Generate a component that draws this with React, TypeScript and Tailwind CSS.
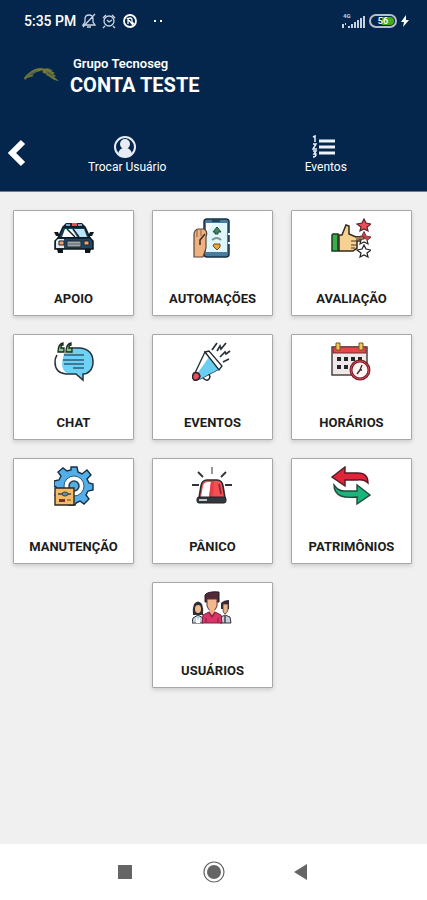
import type { ReactNode } from 'react'

function CarIcon() {
  return (
    <>
      <path d="M9 8 12 5h16l3 3v2H9z" fill="#20242e" />
      <path d="M12 6h4v2h-4zM24 6h4v2h-4z" fill="#7fa5c4" />
      <path d="M18 5h5v3h-5z" fill="#f04b50" />
      <path d="M9 9h22l5 11H4z" fill="#173e5c" stroke="#111820" strokeWidth="1.5" />
      <path d="M11 11h7l5 8H8z" fill="#fff" />
      <path d="M17 11h13l3 8h-9z" fill="#b8e7f7" />
      <path d="m13 11 8 8M19 11l6 8" stroke="#17212b" strokeWidth="1.5" />
      <path d="M0 14h4l2 4H2zM40 14h-4l-2 4h4z" fill="#111820" />
      <path d="M4 20h32l3 3v8H1v-8z" fill="#19486a" stroke="#111820" strokeWidth="1.5" />
      <path d="M4 21h6v9H2v-7z" fill="#e4eaee" />
      <path d="M5 23h5v4H5zM30 23h5v4h-5z" fill="#f7a36e" stroke="#222" strokeWidth="1" />
      <path d="M13 23h14v6H13z" fill="#a0a6a8" stroke="#222" strokeWidth="1" />
      <path d="M13 26h14" stroke="#59636a" />
      <path d="M3 31h6v4H4zM31 31h6l-1 4h-5z" fill="#10151a" />
    </>
  )
}

function PhoneIcon() {
  return (
    <>
      <rect x="12" y="1" width="25" height="38" rx="3" fill="#477c9e" stroke="#173144" strokeWidth="1.5" />
      <path d="M14 5h21v29H14z" fill="#dff6fc" />
      <path d="M14 5h7l-7 10z" fill="#fff" />
      <path d="M20 3h8" stroke="#183246" strokeWidth="1.5" />
      <path d="M37 15v2M37 24v2" stroke="#eef9ff" strokeWidth="2" />
      <path d="m25 9 4 5h-3v2h-3v-2h-2z" fill="#3e8c58" stroke="#214937" strokeWidth="1" />
      <path d="M20 22q5-4 9 0" fill="none" stroke="#7b9693" strokeWidth="2" />
      <path d="M22 26h6v3l-3 3-4-4z" fill="#f4a32f" stroke="#624d2d" strokeWidth="1" />
      <path d="M2 39V17q0-5 4-6h6q4 2 2 8v11l-3 9z" fill="#efb17f" stroke="#5c4638" strokeWidth="1.2" />
      <path d="M5 12v7M9 12v6" fill="none" stroke="#8b6248" strokeWidth="1" />
      <path d="m13 16-5 6v5" fill="none" stroke="#352e2a" strokeWidth="1.5" />
    </>
  )
}

function RatingIcon() {
  return (
    <>
      <path d="M2 16h5v17H1V17z" fill="#3bae47" stroke="#153d24" strokeWidth="1.5" />
      <path d="M8 17h3l4-10 3 1v8l7 3h8v4h-7v7l-4 3H8z" fill="#f7d191" stroke="#34291c" strokeWidth="1.5" />
      <path d="M20 23h6M20 27h6M20 30h4" stroke="#493727" strokeWidth="1.2" />
      <path d="m33 1 2 4 5 1-4 3 1 4-4-2-4 2 1-4-4-3 5-1z" fill="#ef4d57" stroke="#52272d" strokeWidth="1.2" />
      <path d="m33 14 2 4 5 1-4 3 1 4-4-2-4 2 1-4-4-3 5-1z" fill="#fff" stroke="#34272a" strokeWidth="1.2" />
      <path d="m33 14 2 4 5 1-4 3-3-1-3 1-4-3 5-1z" fill="#ca464e" />
      <path d="M25 19h8v2h-8" fill="#f5c58a" stroke="#302822" />
      <path d="m33 27 2 4 5 1-4 3 1 4-4-2-4 2 1-4-4-3 5-1z" fill="#fff" stroke="#222" strokeWidth="1.2" />
    </>
  )
}

function ChatIcon() {
  return (
    <>
      <path d="M10 11h6q1-5 8-5c10 0 15 5 15 14 0 8-5 12-10 13v5l-7-6H14q-6-3-6-11z" fill="#6ed2f6" />
      <path d="M18 6h8c9 1 13 6 13 14 0 8-5 12-10 12v6l-7-6H12Q1 31 1 20q0-4 2-7" fill="none" stroke="#27323a" strokeWidth="1.5" />
      <path d="M10 13h20M9 18h21M10 22h20M19 26h11" stroke="#315e76" strokeWidth="1.5" />
      <path d="M9 1C5 2 4 5 4 10h6V6H7q0-3 2-3zM17 1c-4 1-5 4-5 9h6V6h-3q0-3 2-3z" fill="#8bc58a" stroke="#15291b" strokeWidth="1.3" />
    </>
  )
}

function MegaphoneIcon() {
  return (
    <>
      <path d="M13 10 27 27 8 37l-5-6z" fill="#fff" stroke="#243039" strokeWidth="1.3" />
      <path d="m17 15 10 12L8 37l-3-5z" fill="#69cef2" />
      <path d="m13 10 4-1 13 15-3 4z" fill="#fff" stroke="#202930" strokeWidth="1.3" />
      <path d="M2 31q4-2 6 3-1 5-6 4-3-3 0-7z" fill="#eb4d5d" stroke="#29232a" strokeWidth="1.5" />
      <path d="M11 36q5 5 7-1l-1-3" fill="none" stroke="#222b31" strokeWidth="1.5" />
      <path d="m20 8 5-7M25 9l3-5 1 3 5-6M28 15l5-5 1 2 4-3M31 20l6-3" fill="none" stroke="#283137" strokeWidth="1.7" />
    </>
  )
}

function CalendarIcon() {
  return (
    <>
      <path d="M1 5h35v28H1z" fill="#f0e8e8" stroke="#4b4245" strokeWidth="1.5" />
      <path d="M2 5h33v6H2z" fill="#e84449" stroke="#702e34" strokeWidth="1" />
      <path d="M5 1h4v7H5zM28 1h4v7h-4z" fill="#f4c84e" stroke="#70572c" strokeWidth="1" />
      <path d="M6 15h4v4H6zM13 15h4v4h-4zM20 15h4v4h-4zM27 15h4v4h-4zM6 23h4v4H6zM13 23h4v4h-4z" fill="#20282b" />
      <circle cx="29" cy="28" r="9" fill="#fff5f3" stroke="#7e1c2a" strokeWidth="3" />
      <circle cx="29" cy="28" r="9" fill="none" stroke="#d04c54" strokeWidth="1" />
      <path d="m31 23-2 5h2m-2 0-3 4" fill="none" stroke="#303137" strokeWidth="1.4" />
    </>
  )
}

function GearIcon() {
  return (
    <>
      <path d="M17 1h6l1 5 4 2 5-4 4 5-4 4 2 4 4 1v6l-5 1-2 4 3 4-5 5-4-3-4 2-1 2h-6l-2-5-5-2-4 2-3-5 3-4-2-4-2-1v-5l5-1 2-4-3-4 5-4 4 3 4-1z" fill="#54aeea" stroke="#152f41" strokeWidth="1.4" />
      <circle cx="20" cy="20" r="10" fill="#fff" stroke="#315a76" strokeWidth="1" />
      <circle cx="20" cy="20" r="5" fill="#52aee8" stroke="#243b4d" strokeWidth="1.5" />
      <path d="M1 22h19v17H1z" fill="#f2bd65" stroke="#30281e" strokeWidth="1.4" />
      <path d="M4 28h13" stroke="#384349" strokeWidth="1.5" />
      <ellipse cx="11" cy="28" rx="3" ry="2" fill="#6894a0" stroke="#384349" />
      <path d="M5 33h6v3H5z" fill="#7c3029" />
      <path d="M13 34h4" stroke="#a5653e" strokeWidth="1.5" />
    </>
  )
}

function SirenIcon() {
  return (
    <>
      <path d="m7 32 2-12q1-6 6-6h10q5 0 6 6l2 12z" fill="#f45053" stroke="#272c32" strokeWidth="1.6" />
      <path d="m9 31 2-11q1-4 5-4h3l-2 15z" fill="#fff" />
      <path d="m19 15-2 16h4l1-16z" fill="#df414a" />
      <path d="M27 18l2 10" stroke="#8b2b36" strokeWidth="1.8" />
      <rect x="5" y="31" width="29" height="6" rx="2" fill="#333840" stroke="#202327" />
      <path d="M7 33h8v2H7z" fill="#c7c8c9" />
      <path d="M20 1v7" stroke="#8a8d92" strokeWidth="1.8" />
      <path d="m6 6 5 5M34 6l-5 5M0 19h7M33 19h7" stroke="#30343b" strokeWidth="1.8" />
    </>
  )
}

function ArrowsIcon() {
  return (
    <>
      <path d="M1 11 14 1v6h13q10 0 10 10-4-4-11-3H14v6z" fill="#df2638" stroke="#4d1e25" strokeWidth="1.4" />
      <path d="M39 29 26 19v6H13q-6 0-10-6 0 8 7 11 5 2 16 1v7z" fill="#1cb47b" stroke="#214a3d" strokeWidth="1.4" />
    </>
  )
}

function PeopleIcon() {
  return (
    <>
      <path d="M1 25q-1-6 1-11 4-5 8 0 2 5 1 11z" fill="#302e35" />
      <ellipse cx="6" cy="19" rx="3" ry="4" fill="#f2b991" />
      <path d="m0 33 1-5 5-3 5 3v5z" fill="#c3d0e0" stroke="#34333d" />
      <path d="m4 27 2 3 2-3v6H4z" fill="#fff" />
      <path d="M29 19v-6q3-3 8-3v9z" fill="#332c30" />
      <path d="M31 14h5v6q-1 3-3 4-2-1-2-4z" fill="#eab188" stroke="#4a3833" strokeWidth="0.8" />
      <path d="m28 33 1-6 4-2 5 2 1 6z" fill="#c7cdd8" stroke="#34333d" />
      <path d="M33 26v7" stroke="#39454e" strokeWidth="1.5" />
      <path d="M13 12V5q3-4 14-3v10z" fill="#52293a" stroke="#241f24" />
      <path d="M15 9h10v7q-1 4-5 6-4-2-5-6z" fill="#f3b890" stroke="#5b3930" />
      <path d="M17 20h6v5h-6z" fill="#eaaa85" />
      <path d="m10 33 1-8 6-3 3 4 3-4 6 3 1 8z" fill="#dc3468" stroke="#68273c" strokeWidth="1" />
      <path d="m17 23 3 4 3-4M14 28v5M26 28v5" fill="none" stroke="#942443" strokeWidth="1.2" />
    </>
  )
}

const items: { label: string; icon: ReactNode }[] = [
  { label: 'APOIO', icon: <CarIcon /> },
  { label: 'AUTOMAÇÕES', icon: <PhoneIcon /> },
  { label: 'AVALIAÇÃO', icon: <RatingIcon /> },
  { label: 'CHAT', icon: <ChatIcon /> },
  { label: 'EVENTOS', icon: <MegaphoneIcon /> },
  { label: 'HORÁRIOS', icon: <CalendarIcon /> },
  { label: 'MANUTENÇÃO', icon: <GearIcon /> },
  { label: 'PÂNICO', icon: <SirenIcon /> },
  { label: 'PATRIMÔNIOS', icon: <ArrowsIcon /> },
  { label: 'USUÁRIOS', icon: <PeopleIcon /> },
]

function StatusBar() {
  return (
    <div className="flex h-[42px] items-center pl-6 pr-[18px]">
      <span className="text-[14px] font-medium">5:35 PM</span>
      <svg className="ml-1.5 h-4 w-[58px]" viewBox="0 0 58 16" fill="none" stroke="#cbd5e4" strokeWidth="1.3">
        <path d="M1 12h12l-2-3V6q0-4-4-4T3 6v3zM5 14h4M1 14 13 1" />
        <circle cx="27" cy="8" r="5" />
        <path d="m21 5 3-3m6 0 3 3m-8 2 2 2 3-2M23 13l-2 2m10-2 2 2" />
        <circle cx="48" cy="8" r="6" stroke="#fff" strokeWidth="1.8" />
        <path d="M46 11V7q0-2 2-2t2 2v2l2 2M45 5l6 7" stroke="#fff" />
      </svg>
      <svg className="ml-3 h-1 w-3" viewBox="0 0 12 4" fill="#fff">
        <path d="M2 1h2v2H2zM8 1h2v2H8z" />
      </svg>
      <div className="ml-auto flex items-center gap-1">
        <svg className="h-4 w-6" viewBox="0 0 24 16" fill="#c8d2df">
          <text x="2" y="5" fontSize="6" fontWeight="700">4G</text>
          <path d="M1 11h2v4H1zM4 10h1v2H4zM7 13h2v2H7zM10 11h2v4h-2zM13 9h2v6h-2zM16 7h2v8h-2zM19 5h2v10h-2zM22 3h2v12h-2z" />
        </svg>
        <svg className="h-[14px] w-7" viewBox="0 0 28 14">
          <rect x="1" y="1" width="26" height="12" rx="6" fill="#06254c" stroke="#b4bfca" strokeWidth="2" />
          <path d="M13 3h8q4 0 4 4t-4 4h-8z" fill="#43ac16" />
          <text x="14" y="10" textAnchor="middle" fontSize="9" fontWeight="600" fill="#fff">56</text>
        </svg>
        <svg className="h-3 w-2" viewBox="0 0 8 12" fill="#fff"><path d="M5 0 0 7h3l-1 5 6-7H5z" /></svg>
      </div>
    </div>
  )
}

export default function App() {
  return (
    <div className="flex min-h-screen flex-col bg-[#f0f0f0] font-['Roboto','Liberation_Sans',sans-serif]">
      <header className="border-b border-[#777985] bg-[#05264c] text-white">
        <StatusBar />
        <div className="flex h-[72px] items-start pl-6 pt-[13px]">
          <svg className="mt-3 h-[14px] w-9 shrink-0" viewBox="0 0 36 14" fill="#76783a">
            <path d="M0 11q3-4 6-6 5-4 11-4l4 1-5 2q-5 1-8 4l2 1-4 1-3 1-2 2z" />
            <path d="m18 2 8-1-2 1 5 1-2 1 4 2-2 1 3 2-2 1 5 4q-6-1-9-4l-4-2 1-1-4-1z" />
            <path d="m2 10 6-5 7-2-7 5z" fill="#4b6349" />
            <path d="m22 4 5 2 4 5-7-4z" fill="#47623e" />
          </svg>
          <div className="ml-2.5">
            <p className="pl-[3px] text-[13px] leading-[18px] font-semibold">Grupo Tecnoseg</p>
            <h1 className="text-[20px] leading-6 font-bold">CONTA TESTE</h1>
          </div>
        </div>
        <nav className="flex h-[77px] pr-0.5">
          <button aria-label="Voltar" className="flex h-[77px] w-7 items-center pl-[7px]">
            <svg className="h-7 w-5" viewBox="0 0 20 28" fill="none" stroke="#fff" strokeWidth="6">
              <path d="M16 3 5 14l11 11" />
            </svg>
          </button>
          <div className="grid flex-1 grid-cols-2 text-[12px] leading-4">
            <button className="flex flex-col items-center pt-[21px]">
              <svg className="mr-1 h-6 w-6" viewBox="0 0 24 24">
                <circle cx="12" cy="12" r="10" fill="none" stroke="#e8edf5" strokeWidth="2" />
                <circle cx="12" cy="9" r="5" fill="#e8edf5" />
                <path d="M5 19q1-5 5-6h4q4 1 5 6-7 6-14 0z" fill="#e8edf5" />
              </svg>
              Trocar Usuário
            </button>
            <button className="flex flex-col items-center pt-[21px]">
              <svg className="mr-1 h-6 w-6" viewBox="0 0 24 24" fill="none" stroke="#edf2f8">
                <path d="M7 6h16M7 12h16M7 18h16" strokeWidth="3" />
                <path d="m1 2 2-1v6M1 9h3l-3 5h4M1 16h3l-2 3h2q0 3-3 3" strokeWidth="1.5" />
              </svg>
              Eventos
            </button>
          </div>
        </nav>
      </header>
      <main className="flex flex-1 flex-wrap content-start justify-center gap-[18px] pt-[18px] pr-[15px] pb-6 pl-[13px]">
        {items.map((item) => (
          <button
            key={item.label}
            className="flex h-[106px] w-[calc((100%-36px)/3)] flex-col items-center justify-between rounded-[1px] border border-[#a7a7a7] bg-white pt-[7px] pb-[7px] text-[#1c1c1c] shadow-[0_2px_4px_#00000026]"
          >
            <svg className="h-10 w-10" viewBox="0 0 40 40" aria-hidden="true">{item.icon}</svg>
            <span className="text-[13px] leading-[18px] font-bold">{item.label}</span>
          </button>
        ))}
      </main>
      <footer className="grid h-14 grid-cols-[1fr_88px_88px_88px_1fr] items-center bg-white">
        <button aria-label="Aplicativos recentes" className="col-start-2 grid h-14 place-items-center">
          <svg className="h-6 w-6" viewBox="0 0 24 24" fill="#656565"><path d="M4 5h14v14H4z" /></svg>
        </button>
        <button aria-label="Início" className="grid h-14 place-items-center">
          <svg className="h-6 w-6" viewBox="0 0 24 24">
            <circle cx="12" cy="12" r="10" fill="none" stroke="#656565" strokeWidth="1.2" />
            <circle cx="12" cy="12" r="7" fill="#656565" />
          </svg>
        </button>
        <button aria-label="Voltar à tela anterior" className="grid h-14 place-items-center">
          <svg className="h-6 w-6" viewBox="0 0 24 24" fill="#656565"><path d="M17 4v16L4 12z" /></svg>
        </button>
      </footer>
    </div>
  )
}
